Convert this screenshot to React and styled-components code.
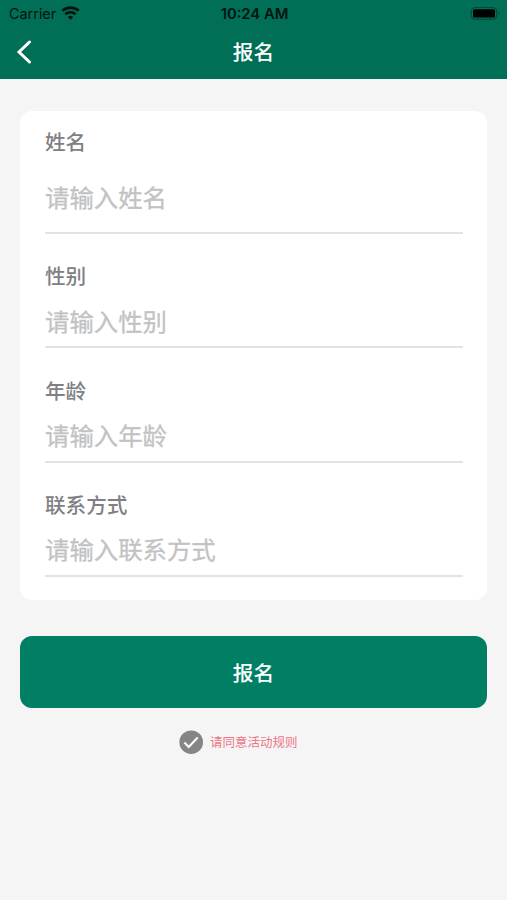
import styled, { createGlobalStyle } from 'styled-components'

const GlobalStyle = createGlobalStyle`
    * {
        box-sizing: border-box;
    }

    body {
        margin: 0;
        background: #f5f5f5;
        font-family: "Liberation Sans", "Noto Sans CJK SC", sans-serif;
    }
`

const fields = [
    { name: 'name', label: '姓名', placeholder: '请输入姓名', tall: true },
    { name: 'gender', label: '性别', placeholder: '请输入性别' },
    { name: 'age', label: '年龄', placeholder: '请输入年龄' },
    { name: 'contact', label: '联系方式', placeholder: '请输入联系方式' },
]

const Page = styled.div`
    min-height: 900px;
    background: #f5f5f5;
`

const Header = styled.header`
    height: 79px;
    background: #006f56;
`

const StatusBar = styled.div`
    display: grid;
    grid-template-columns: 1fr auto 1fr;
    align-items: center;
    height: 27px;
    padding: 0 7px 0 9px;
    font-family: Inter, sans-serif;
    font-size: 14.8px;
    color: #00140f;
`

const Carrier = styled.div`
    display: flex;
    align-items: center;
    gap: 5px;
    font-size: 14.4px;
`

const Clock = styled.span`
    font-weight: 600;
`

const Battery = styled.svg`
    justify-self: end;
`

const NavBar = styled.nav`
    display: grid;
    grid-template-columns: 48px 1fr 48px;
    align-items: center;
    height: 50px;
`

const BackButton = styled.button`
    display: flex;
    padding: 0 0 0 16px;
    border: 0;
    background: none;
`

const Title = styled.h1`
    margin: 0;
    padding-top: 2px;
    text-align: center;
    font-size: 20.7px;
    line-height: 30px;
    font-weight: 500;
    color: #fff;
`

const Main = styled.main`
    padding: 32px 20px 0;
`

const Card = styled.div`
    height: 489px;
    padding: 17px 24px 0 25px;
    border-radius: 12px;
    background: #fff;
`

const Field = styled.label`
    display: flex;
    flex-direction: column;
    height: ${({ $tall }) => ($tall ? '106px' : '87px')};
    padding-top: ${({ $tall }) => ($tall ? '0' : '1px')};
    margin-bottom: 27.3px;
    border-bottom: 2px solid #e3e3e3;
`

const Label = styled.span`
    font-size: 20.6px;
    line-height: 30px;
    font-weight: 500;
    color: #808084;
`

const Input = styled.input`
    flex: 1;
    width: 100%;
    padding: 7px 0 0;
    border: 0;
    outline: 0;
    background: none;
    font-family: inherit;
    font-size: 24.4px;
    color: #333;

    &::placeholder {
        color: #c2c2c4;
        -webkit-text-stroke: 0.3px #c2c2c4;
    }
`

const SubmitButton = styled.button`
    display: block;
    width: 100%;
    height: 72px;
    margin-top: 36px;
    border: 0;
    border-radius: 12px;
    background: #007f65;
    font-family: inherit;
    font-size: 20.7px;
    font-weight: 500;
    color: #fff;
`

const Agreement = styled.div`
    display: flex;
    align-items: center;
    gap: 7px;
    height: 24px;
    margin: 22px 0 0 159px;
    font-size: 12.5px;
    line-height: 22px;
    color: #ed7587;

    span {
        padding-top: 2px;
    }
`

function App() {
    return (
        <Page>
            <GlobalStyle />
            <Header>
                <StatusBar>
                    <Carrier>
                        <span>Carrier</span>
                        <svg width="19" height="15" viewBox="0 0 19 15" fill="none" stroke="#00140f" strokeWidth="2.7">
                            <path d="M1.3 4.8a12 12 0 0 1 16.4 0" />
                            <path d="M4.4 8.3a7.4 7.4 0 0 1 10.2 0" />
                            <path d="m9.5 13.7-2.7-2.8a4 4 0 0 1 5.4 0z" fill="#00140f" stroke="none" />
                        </svg>
                    </Carrier>
                    <Clock>10:24 AM</Clock>
                    <Battery width="30" height="14" viewBox="0 0 30 14">
                        <rect x="1.3" y="0.6" width="25.4" height="11.6" rx="3.5" fill="none" stroke="#004737" />
                        <rect x="3" y="2.2" width="22" height="8.4" rx="1.6" fill="#000" />
                        <path d="M28.3 4.6c1.3.6 1.3 3 0 3.6z" fill="#004737" />
                    </Battery>
                </StatusBar>
                <NavBar>
                    <BackButton aria-label="返回">
                        <svg width="16" height="24" viewBox="0 0 16 24" fill="none" stroke="#fff" strokeWidth="3">
                            <path d="M13.5 2 3 12l10.5 10" strokeLinecap="round" />
                        </svg>
                    </BackButton>
                    <Title>报名</Title>
                </NavBar>
            </Header>
            <Main>
                <Card>
                    {fields.map(field => (
                        <Field key={field.name} $tall={field.tall}>
                            <Label>{field.label}</Label>
                            <Input name={field.name} placeholder={field.placeholder} />
                        </Field>
                    ))}
                </Card>
                <SubmitButton>报名</SubmitButton>
                <Agreement>
                    <svg width="24" height="24" viewBox="0 0 24 24" fill="none">
                        <circle cx="12.2" cy="12.2" r="11.8" fill="#858585" />
                        <path d="m5.4 12.6 4.3 4.3 9-9.4" stroke="#fff" strokeWidth="2.1" />
                    </svg>
                    <span>请同意活动规则</span>
                </Agreement>
            </Main>
        </Page>
    )
}

export default App
